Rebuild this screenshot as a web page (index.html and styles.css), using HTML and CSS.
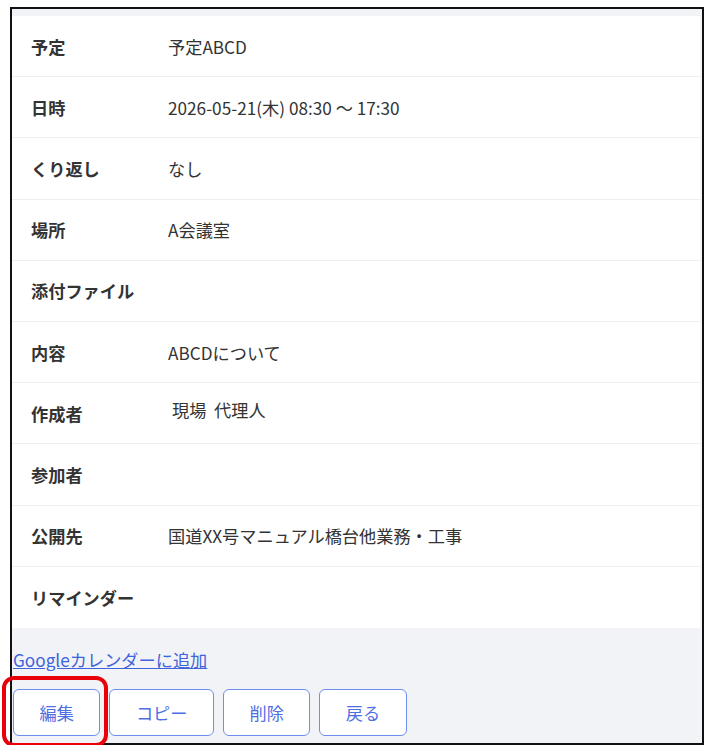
FILE: index.html
```html
<!DOCTYPE html>
<html lang="ja">
<head>
    <meta charset="UTF-8">
    <meta name="viewport" content="width=device-width, initial-scale=1.0">
    <title>予定詳細</title>
    <link rel="stylesheet" href="styles.css">
</head>
<body>
    <div class="frame">
        <div class="detail-card">
            <div class="detail-row">
                <div class="detail-label">予定</div>
                <div class="detail-value">予定ABCD</div>
            </div>
            <div class="detail-row">
                <div class="detail-label">日時</div>
                <div class="detail-value">2026-05-21(木) 08:30 ～ 17:30</div>
            </div>
            <div class="detail-row">
                <div class="detail-label">くり返し</div>
                <div class="detail-value">なし</div>
            </div>
            <div class="detail-row">
                <div class="detail-label">場所</div>
                <div class="detail-value">A会議室</div>
            </div>
            <div class="detail-row">
                <div class="detail-label">添付ファイル</div>
                <div class="detail-value"></div>
            </div>
            <div class="detail-row">
                <div class="detail-label">内容</div>
                <div class="detail-value">ABCDについて</div>
            </div>
            <div class="detail-row">
                <div class="detail-label">作成者</div>
                <div class="detail-value member">現場&nbsp;&nbsp;代理人</div>
            </div>
            <div class="detail-row">
                <div class="detail-label">参加者</div>
                <div class="detail-value"></div>
            </div>
            <div class="detail-row">
                <div class="detail-label">公開先</div>
                <div class="detail-value">国道XX号マニュアル橋台他業務・工事</div>
            </div>
            <div class="detail-row">
                <div class="detail-label">リマインダー</div>
                <div class="detail-value"></div>
            </div>
        </div>
        <div class="detail-footer">
            <a href="#" class="calendar-link">Googleカレンダーに追加</a>
            <div class="button-row">
                <button class="action-button edit-button">編集</button>
                <button class="action-button">コピー</button>
                <button class="action-button">削除</button>
                <button class="action-button">戻る</button>
            </div>
        </div>
    </div>
</body>
</html>
```

FILE: styles.css
```css
body {
    font-family: 'Noto Sans CJK JP', 'Noto Sans', sans-serif;
    margin: 0;
    padding: 0;
    background-color: white;
    color: #333;
}
.frame {
    width: 690px;
    margin: 7px 0 0 10px;
    border: 2px solid #111;
    background-color: #f2f3f7;
    padding-top: 7px;
}
.detail-card {
    background-color: white;
    margin-right: 2px;
}
.detail-row {
    display: flex;
    align-items: center;
    height: 61.2px;
    box-sizing: border-box;
    border-bottom: 1px solid #eeeff3;
    padding-left: 19px;
    font-size: 17.2px;
}
.detail-row:last-child {
    border-bottom: none;
}
.detail-label {
    width: 137px;
    flex-shrink: 0;
    font-weight: bold;
    color: #333;
}
.detail-value {
    color: #333;
}
.detail-value.member {
    padding-left: 4px;
    margin-top: -8px;
}
.detail-footer {
    padding: 20px 0 7px 1px;
}
.calendar-link {
    display: block;
    font-size: 17.2px;
    line-height: 24px;
    color: #3f63dd;
    text-decoration: underline;
}
.button-row {
    display: flex;
    gap: 9px;
    margin-top: 17px;
}
.action-button {
    position: relative;
    height: 47px;
    padding: 0 25.5px;
    font-family: inherit;
    font-size: 17.2px;
    color: #4d6fe2;
    background-color: white;
    border: 1.5px solid #6d8ef0;
    border-radius: 6px;
}
/* 赤枠で編集ボタンを強調 */
.edit-button::after {
    content: '';
    position: absolute;
    left: -12px;
    top: -14px;
    right: -9px;
    bottom: -12px;
    border: 4.5px solid #e8000b;
    border-radius: 12px;
}
```
